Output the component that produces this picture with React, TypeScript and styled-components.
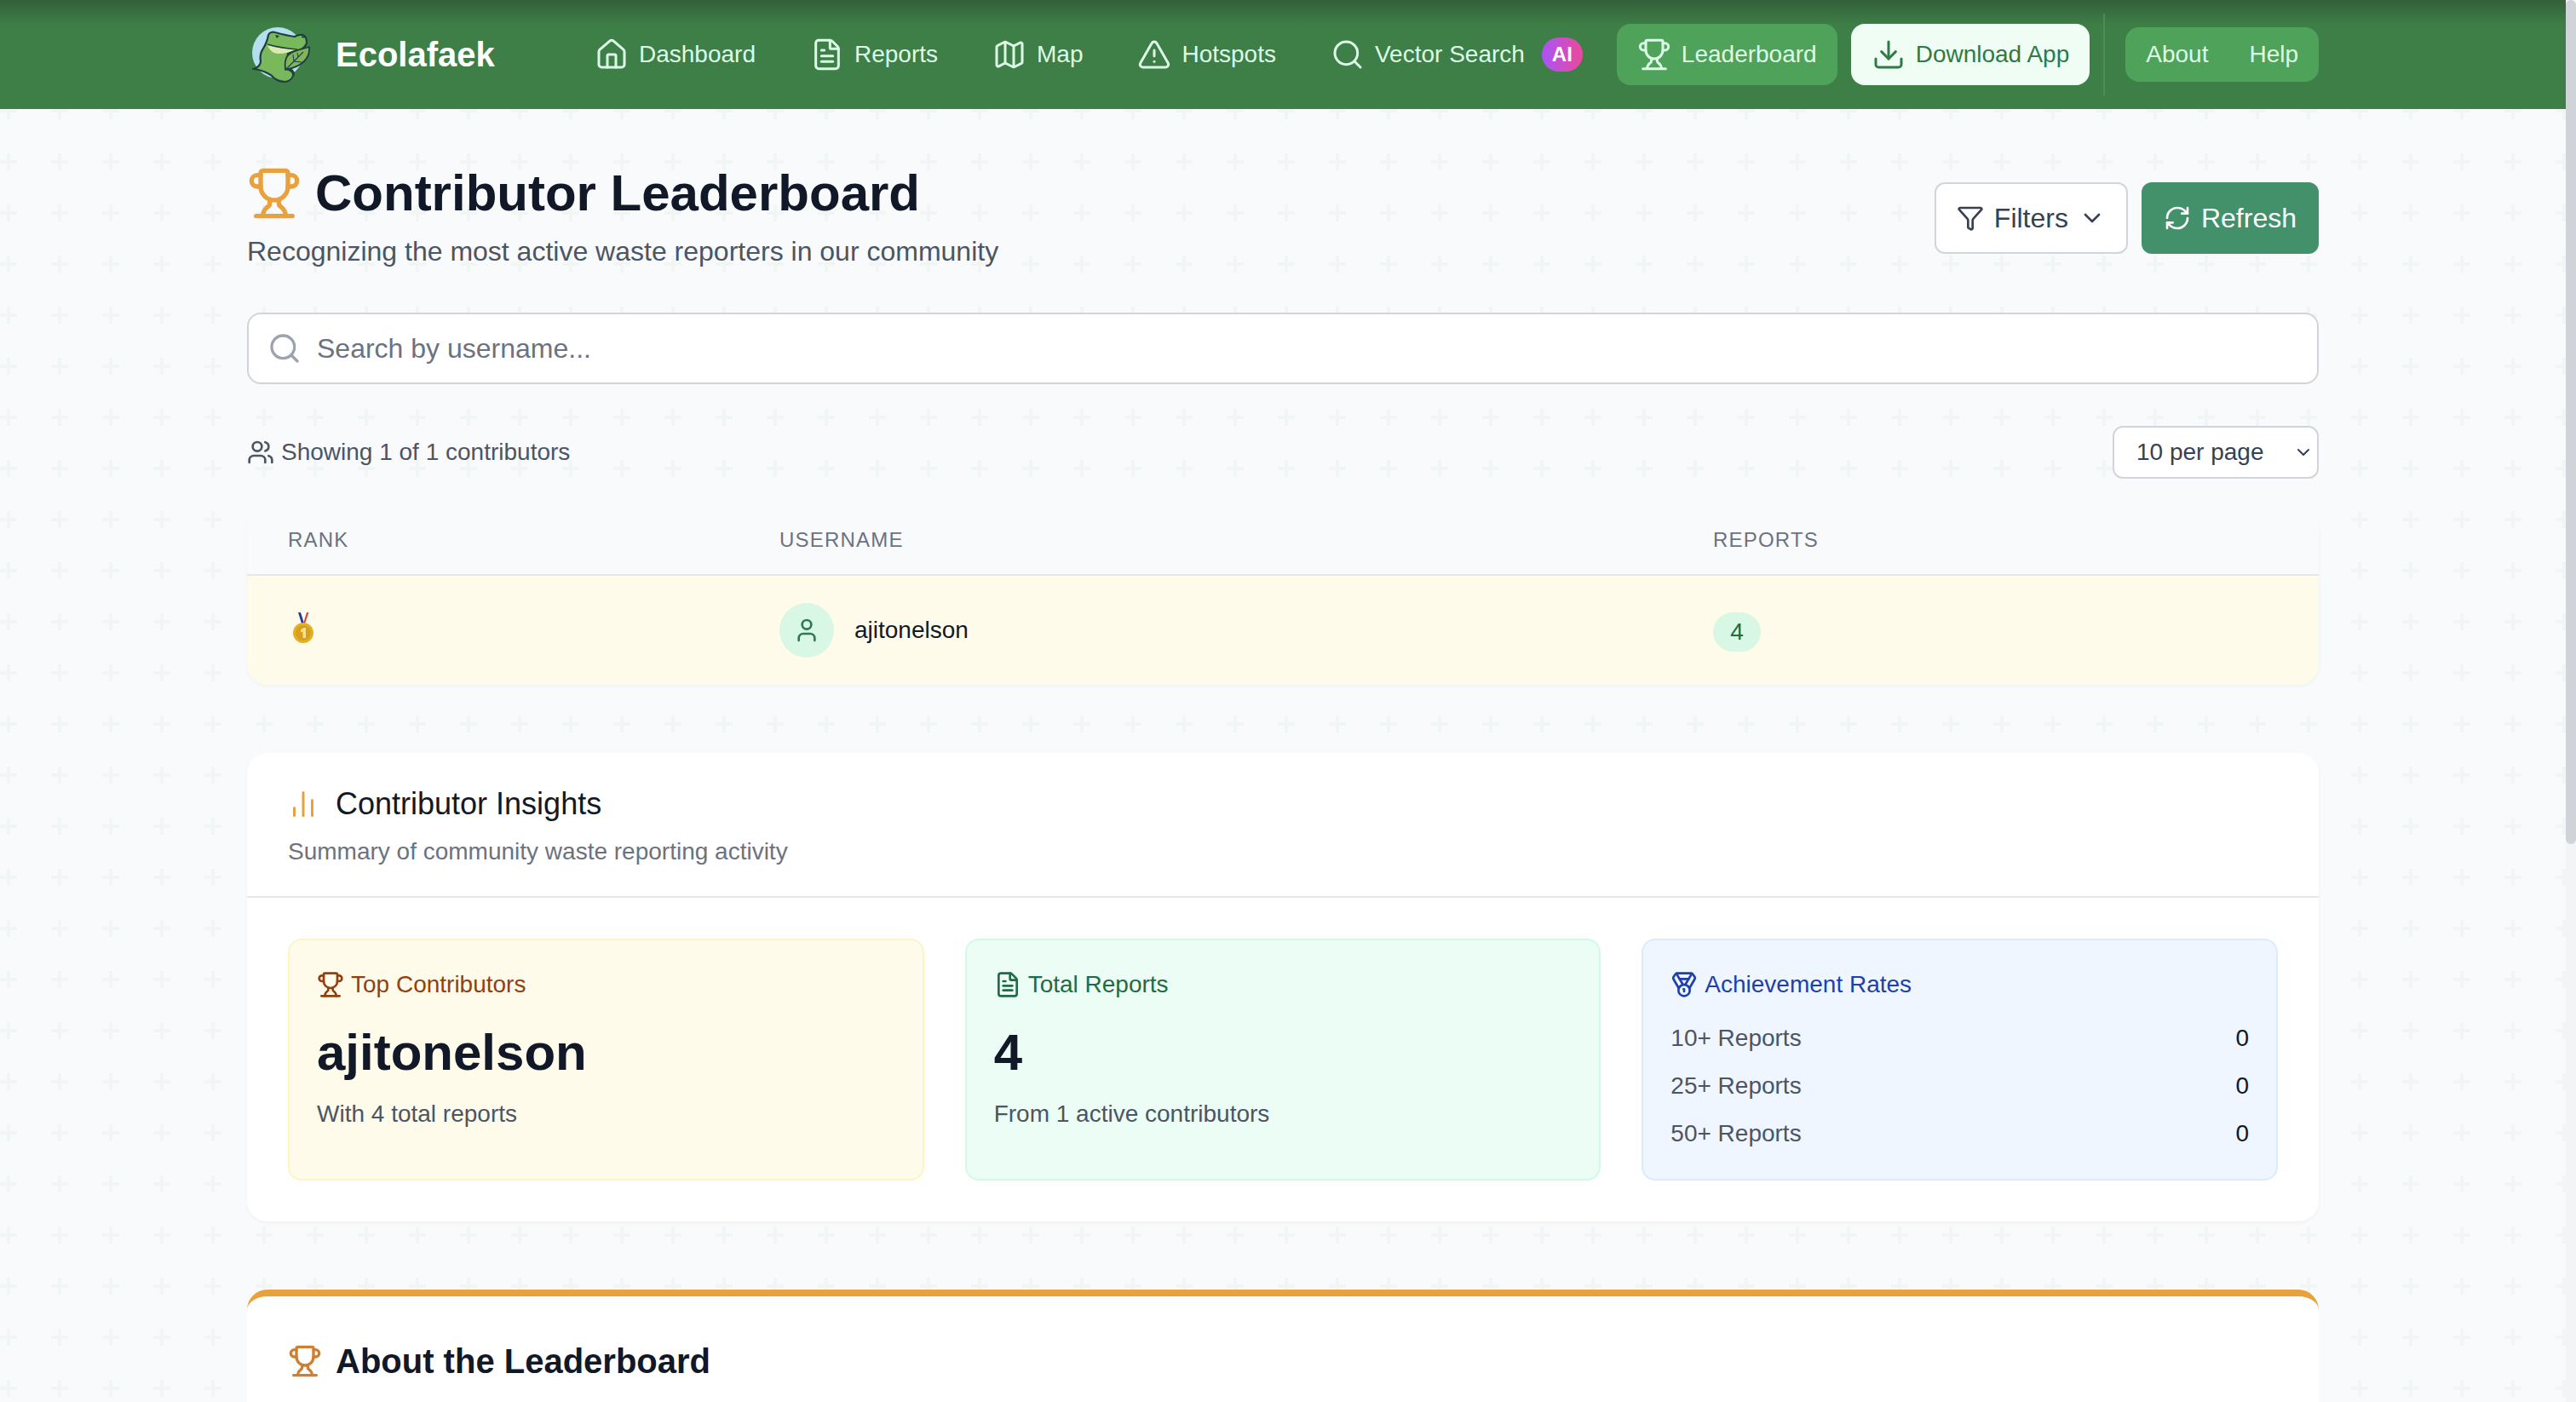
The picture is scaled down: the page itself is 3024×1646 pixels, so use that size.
import React from 'react';
import styled, { createGlobalStyle } from 'styled-components';
import {
  Home, FileText, Map as MapIcon, TriangleAlert, Search, Trophy, Download, Funnel,
  ChevronDown, RefreshCw, Users, User, ChartNoAxesColumn, Medal,
} from 'lucide-react';

const plus = encodeURIComponent(
  '<svg xmlns="http://www.w3.org/2000/svg" width="60" height="60"><path fill="#f1f6f5" d="M8 0h4v8h8v4h-8v8H8v-8H0V8h8z"/></svg>'
);

const GlobalStyle = createGlobalStyle`
  html, body {
    margin: 0;
    height: 100%;
    overflow: hidden;
  }
  body {
    font-family: "Liberation Sans", Arial, sans-serif;
    background: #f9fafb;
    color: #111827;
  }
  * { box-sizing: border-box; }
`;

const Shell = styled.div`
  display: flex;
  height: 1646px;
  overflow: hidden;
`;

const Page = styled.div`
  flex: 1;
  min-width: 0;
  background-color: #f9fafb;
  background-image: url('data:image/svg+xml,${plus}');
  background-size: 60px 60px;
`;

const ScrollTrack = styled.div`
  width: 12px;
  background: #f3f4f6;
`;

const ScrollThumb = styled.div`
  height: 991px;
  border-radius: 6px;
  background: #d0d3d8;
`;

const Nav = styled.header`
  height: 128px;
  background: linear-gradient(#33603a 0, #3e7f47 30px);
`;

const Container = styled.div`
  width: 2432px;
  margin: 0 auto;
`;

const NavInner = styled(Container)`
  height: 128px;
  display: flex;
  align-items: center;
  justify-content: space-between;
`;

const Brand = styled.div`
  display: flex;
  align-items: center;
  gap: 24px;
  font-size: 40px;
  font-weight: 700;
  color: #fff;
`;

const NavLinks = styled.nav`
  display: flex;
  align-items: center;
  gap: 16px;
`;

const NavLink = styled.a<{ $variant?: 'active' | 'download' }>`
  display: flex;
  align-items: center;
  gap: 12px;
  height: 72px;
  padding: 0 24px;
  border-radius: 16px;
  font-size: 28px;
  white-space: nowrap;
  color: ${(p) => (p.$variant === 'download' ? '#2f7a46' : '#dcfce7')};
  background: ${(p) => (p.$variant === 'download' ? '#f0fdf4' : p.$variant === 'active' ? '#4fa259' : 'transparent')};
`;

const AiBadge = styled.span`
  width: 48px;
  height: 40px;
  border-radius: 20px;
  margin-left: 8px;
  background: linear-gradient(90deg, #a855f7, #ec4899);
  color: #fff;
  font-size: 24px;
  font-weight: 700;
  display: flex;
  align-items: center;
  justify-content: center;
`;

const NavDivider = styled.div`
  width: 2px;
  height: 96px;
  margin-right: 8px;
  background: #4d8c55;
`;

const PillGroup = styled.div`
  display: flex;
  align-items: center;
  height: 64px;
  background: #4fa259;
  border-radius: 16px;
`;

const PillLink = styled.a`
  padding: 0 24px;
  font-size: 28px;
  color: #dcfce7;
`;

const Main = styled(Container)`
  padding-top: 63px;
`;

const HeadRow = styled.div`
  display: flex;
  justify-content: space-between;
  align-items: center;
`;

const Title = styled.h1`
  margin: 0;
  display: flex;
  align-items: center;
  gap: 16px;
  font-size: 60px;
  line-height: 72px;
  font-weight: 700;
  color: #111827;
`;

const Subtitle = styled.p`
  margin: 8px 0 0;
  font-size: 32px;
  line-height: 48px;
  color: #4b5563;
`;

const HeadActions = styled.div`
  display: flex;
  gap: 16px;
  margin-top: 2px;
`;

const FilterButton = styled.button`
  display: flex;
  align-items: center;
  gap: 12px;
  height: 84px;
  padding: 0 24px;
  font: inherit;
  font-size: 32px;
  color: #374151;
  background: #fff;
  border: 2px solid #d1d5db;
  border-radius: 12px;
`;

const RefreshButton = styled.button`
  display: flex;
  align-items: center;
  gap: 12px;
  height: 84px;
  padding: 0 26px;
  font: inherit;
  font-size: 32px;
  color: #fff;
  background: #42916b;
  border: 0;
  border-radius: 12px;
`;

const SearchBox = styled.div`
  display: flex;
  align-items: center;
  gap: 18px;
  height: 84px;
  margin-top: 48px;
  padding: 0 22px;
  background: #fff;
  border: 2px solid #d1d5db;
  border-radius: 16px;
  font-size: 32px;
  color: #6b7280;
`;

const ListMeta = styled.div`
  display: flex;
  justify-content: space-between;
  align-items: center;
  margin-top: 49px;
`;

const Showing = styled.div`
  display: flex;
  align-items: center;
  gap: 8px;
  font-size: 28px;
  color: #4b5563;
`;

const PerPage = styled.div`
  display: flex;
  align-items: center;
  justify-content: space-between;
  width: 242px;
  height: 62px;
  padding: 0 4px 0 26px;
  background: #fff;
  border: 2px solid #d1d5db;
  border-radius: 12px;
  font-size: 28px;
  color: #374151;
`;

const Table = styled.div`
  margin-top: 32px;
  border-radius: 24px;
  overflow: hidden;
  box-shadow: 0 2px 4px rgba(0, 0, 0, 0.04);
`;

const Row = styled.div<{ $head?: boolean }>`
  display: grid;
  grid-template-columns: 577px 1096px 1fr;
  align-items: center;
  padding: 0 48px;
  height: ${(p) => (p.$head ? '82px' : '128px')};
  background: ${(p) => (p.$head ? '#f9fafb' : '#fffbeb')};
  border-bottom: ${(p) => (p.$head ? '2px solid #e5e7eb' : '0')};
`;

const HeadCell = styled.div`
  font-size: 24px;
  letter-spacing: 1.2px;
  color: #6b7280;
`;

const MedalCell = styled.div`
  display: flex;
  padding: 0 0 6px 6px;
`;

const UserCell = styled.div`
  display: flex;
  align-items: center;
  gap: 24px;
  font-size: 28px;
  color: #111827;
`;

const Avatar = styled.div`
  width: 64px;
  height: 64px;
  border-radius: 50%;
  background: #d8f7e4;
  color: #2f7a56;
  display: flex;
  align-items: center;
  justify-content: center;
`;

const CountCell = styled.div`
  display: flex;
  padding-top: 3px;
`;

const CountBadge = styled.span`
  display: inline-flex;
  align-items: center;
  justify-content: center;
  width: 56px;
  height: 46px;
  border-radius: 23px;
  background: #d8f7e4;
  color: #1f6b45;
  font-size: 28px;
`;

const Card = styled.section`
  margin-top: 80px;
  background: #fff;
  border-radius: 24px;
  box-shadow: 0 2px 4px rgba(0, 0, 0, 0.04);
`;

const CardHead = styled.div`
  height: 170px;
  padding: 38px 48px 0;
  border-bottom: 2px solid #e5e7eb;
`;

const CardTitle = styled.h2`
  margin: 0;
  display: flex;
  align-items: center;
  gap: 20px;
  font-size: 36px;
  line-height: 44px;
  font-weight: 400;
  color: #111827;
`;

const CardSub = styled.p`
  margin: 16px 0 0;
  font-size: 28px;
  line-height: 36px;
  color: #6b7280;
`;

const Stats = styled.div`
  display: grid;
  grid-template-columns: repeat(3, 1fr);
  gap: 48px;
  padding: 48px;
`;

const tones = {
  amber: { bg: '#fffbeb', line: '#fef3c7', ink: '#92400e' },
  green: { bg: '#ecfdf5', line: '#d1fae5', ink: '#1f6b45' },
  blue: { bg: '#eff6ff', line: '#dbeafe', ink: '#1e40af' },
};

type Tone = keyof typeof tones;

const Stat = styled.div<{ $tone: Tone }>`
  height: 284px;
  padding: 32px 32px 0;
  background: ${(p) => tones[p.$tone].bg};
  border: 2px solid ${(p) => tones[p.$tone].line};
  border-radius: 16px;
`;

const StatLabel = styled.div<{ $tone: Tone }>`
  display: flex;
  align-items: center;
  gap: 8px;
  font-size: 28px;
  line-height: 40px;
  color: ${(p) => tones[p.$tone].ink};
`;

const StatValue = styled.div`
  margin-top: 24px;
  font-size: 60px;
  line-height: 72px;
  font-weight: 700;
  color: #111827;
`;

const StatNote = styled.div`
  margin-top: 16px;
  font-size: 28px;
  line-height: 40px;
  color: #4b5563;
`;

const RateList = styled.div`
  margin-top: 23px;
  display: flex;
  flex-direction: column;
  gap: 16px;
`;

const RateRow = styled.div`
  display: flex;
  justify-content: space-between;
  font-size: 28px;
  line-height: 40px;
  color: #4b5563;
  > b {
    font-weight: 400;
    color: #111827;
  }
`;

const AboutCard = styled.section`
  margin-top: 80px;
  height: 300px;
  padding: 52px 48px;
  background: #fff;
  border-top: 8px solid #e9a23b;
  border-radius: 24px 24px 0 0;
`;

const AboutTitle = styled.h2`
  margin: 0;
  display: flex;
  align-items: center;
  gap: 16px;
  font-size: 40px;
  line-height: 48px;
  font-weight: 700;
  color: #111827;
`;

function Logo() {
  const ink = '#1f4040';
  return (
    <svg width="80" height="80" viewBox="0 0 80 80">
      <circle cx="36" cy="38" r="30" fill="#b5dfee" />
      <path
        d="M25 17c1-3 5-4 8-3 7 2 15 4 23 5 3-2 9-3 11-1 3 2 3 6 3 9-3 6-8 9-14 9l-8 3-2 16c3 1 8 3 9 7 0 4-4 8-10 10-7 0-13-3-17-8-4-2-7-4-11-5-3-1-6-2-10-2 5-1 8-4 9-8-1-6 0-12 3-16 3-5 5-9 6-16z"
        fill="#79b95b"
        stroke={ink}
        strokeWidth="2.2"
        strokeLinejoin="round"
      />
      <path d="M24 29c10 3 22 4 33 5-7 3-13 5-20 5-6 0-11-4-13-10z" fill="#dce9b2" />
      <path d="M24 28c10 3 23 5 35 6" fill="none" stroke={ink} strokeWidth="1.4" />
      <path d="M33 17l5 1-3 3z" fill={ink} />
      <path d="M64 19l3 1" fill="none" stroke={ink} strokeWidth="1.6" />
      <path d="M73 31c1 11-4 22-28 27-1-8 0-14 3-17 6-6 16-7 25-10z" fill="#80b55a" stroke={ink} strokeWidth="1.8" strokeLinejoin="round" />
      <path d="M46 57l20-20M55 48l-1-8M60 43l-1-5M55 48l9 1" fill="none" stroke={ink} strokeWidth="1.1" />
      <path d="M44 58c4-1 9 1 10 5 0 4-3 8-9 9" fill="#79b95b" stroke={ink} strokeWidth="1.8" />
    </svg>
  );
}

function MedalEmoji() {
  return (
    <svg width="24" height="36" viewBox="0 0 24 36">
      <path d="M6 0h3l4 13h-3z" fill="#2a3a9c" />
      <path d="M18.5 0h-2.5l-4 13h2z" fill="#e0433a" />
      <path d="M9 0h4l-.5 6z" fill="#fff" />
      <circle cx="12" cy="24" r="12" fill="#e3b02a" />
      <circle cx="12" cy="24" r="9" fill="#d69f1c" />
      <path d="M9 20.5l3.500-2.500h2.500v12h-3.500v-7.500l-2.500 1z" fill="#f8e08a" />
    </svg>
  );
}

export default function App() {
  return (
    <>
      <GlobalStyle />
      <Shell>
        <Page>
          <Nav>
            <NavInner>
              <Brand><Logo />Ecolafaek</Brand>
              <NavLinks>
                <NavLink><Home size={40} strokeWidth={1.8} />Dashboard</NavLink>
                <NavLink><FileText size={40} strokeWidth={1.8} />Reports</NavLink>
                <NavLink><MapIcon size={40} strokeWidth={1.8} />Map</NavLink>
                <NavLink><TriangleAlert size={40} strokeWidth={1.8} />Hotspots</NavLink>
                <NavLink><Search size={40} strokeWidth={1.8} />Vector Search<AiBadge>AI</AiBadge></NavLink>
                <NavLink $variant="active"><Trophy size={40} strokeWidth={1.8} />Leaderboard</NavLink>
                <NavLink $variant="download"><Download size={40} strokeWidth={1.8} />Download App</NavLink>
                <NavDivider />
                <PillGroup>
                  <PillLink>About</PillLink>
                  <PillLink>Help</PillLink>
                </PillGroup>
              </NavLinks>
            </NavInner>
          </Nav>
          <Main>
            <HeadRow>
              <div>
                <Title><Trophy size={64} color="#e9a23b" />Contributor Leaderboard</Title>
                <Subtitle>Recognizing the most active waste reporters in our community</Subtitle>
              </div>
              <HeadActions>
                <FilterButton><Funnel size={32} />Filters<ChevronDown size={32} /></FilterButton>
                <RefreshButton><RefreshCw size={32} />Refresh</RefreshButton>
              </HeadActions>
            </HeadRow>
            <SearchBox><Search size={40} color="#9ca3af" />Search by username...</SearchBox>
            <ListMeta>
              <Showing><Users size={32} />Showing 1 of 1 contributors</Showing>
              <PerPage>10 per page<ChevronDown size={24} /></PerPage>
            </ListMeta>
            <Table>
              <Row $head>
                <HeadCell>RANK</HeadCell>
                <HeadCell>USERNAME</HeadCell>
                <HeadCell>REPORTS</HeadCell>
              </Row>
              <Row>
                <MedalCell><MedalEmoji /></MedalCell>
                <UserCell><Avatar><User size={32} /></Avatar>ajitonelson</UserCell>
                <CountCell><CountBadge>4</CountBadge></CountCell>
              </Row>
            </Table>
            <Card>
              <CardHead>
                <CardTitle><ChartNoAxesColumn size={36} color="#e9a23b" />Contributor Insights</CardTitle>
                <CardSub>Summary of community waste reporting activity</CardSub>
              </CardHead>
              <Stats>
                <Stat $tone="amber">
                  <StatLabel $tone="amber"><Trophy size={32} />Top Contributors</StatLabel>
                  <StatValue>ajitonelson</StatValue>
                  <StatNote>With 4 total reports</StatNote>
                </Stat>
                <Stat $tone="green">
                  <StatLabel $tone="green"><FileText size={32} />Total Reports</StatLabel>
                  <StatValue>4</StatValue>
                  <StatNote>From 1 active contributors</StatNote>
                </Stat>
                <Stat $tone="blue">
                  <StatLabel $tone="blue"><Medal size={32} />Achievement Rates</StatLabel>
                  <RateList>
                    <RateRow>10+ Reports<b>0</b></RateRow>
                    <RateRow>25+ Reports<b>0</b></RateRow>
                    <RateRow>50+ Reports<b>0</b></RateRow>
                  </RateList>
                </Stat>
              </Stats>
            </Card>
            <AboutCard>
              <AboutTitle><Trophy size={40} color="#d07f30" />About the Leaderboard</AboutTitle>
            </AboutCard>
          </Main>
        </Page>
        <ScrollTrack><ScrollThumb /></ScrollTrack>
      </Shell>
    </>
  );
}
